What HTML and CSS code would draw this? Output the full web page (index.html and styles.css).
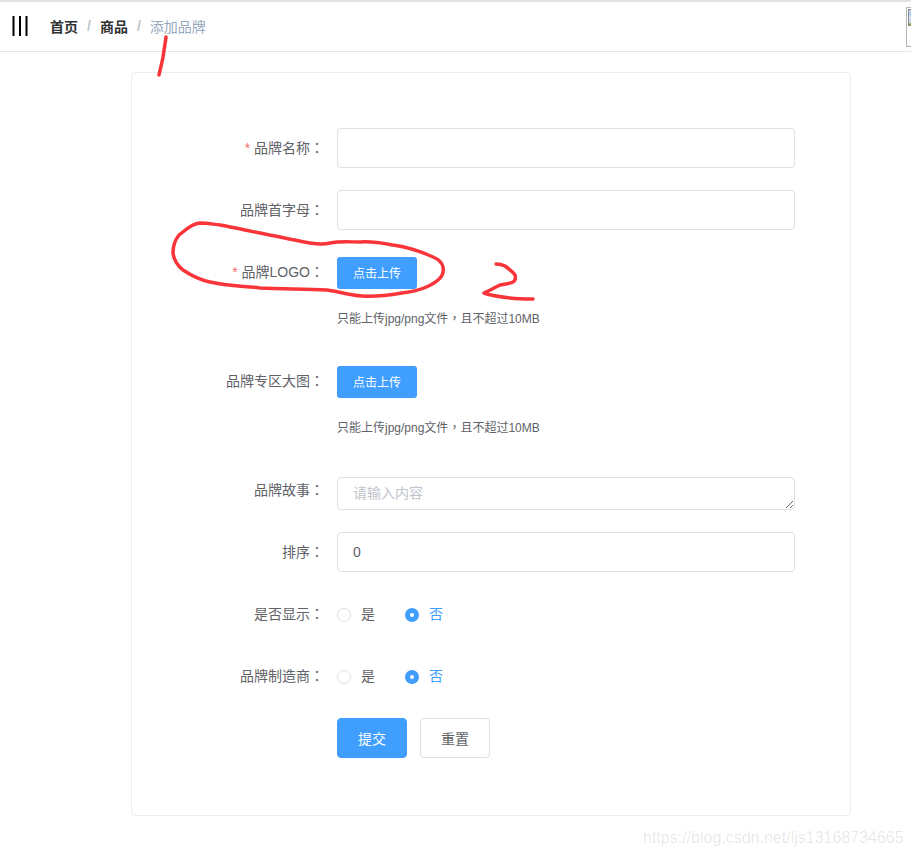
FILE: index.html
```html
<!DOCTYPE html>
<html lang="zh-CN">
<head>
<meta charset="utf-8">
<title>添加品牌</title>
<link rel="stylesheet" href="styles.css">
</head>
<body>
<header class="navbar">
  <svg class="hamburger" width="16" height="20" viewBox="0 0 16 20"><path d="M1.5 0V20M8 0V20M14.5 0V20" stroke="#000" stroke-width="2" fill="none"/></svg>
  <nav class="crumbs">
    <span class="crumb">首页</span><span class="sep">/</span>
    <span class="crumb">商品</span><span class="sep">/</span>
    <span class="crumb crumb-current">添加品牌</span>
  </nav>
  <span class="broken-img"><svg width="16" height="17" viewBox="0 0 16 17"><rect x="0.5" y="0.5" width="15" height="16" fill="#cfe0f5" stroke="#8a8a8a"/><rect x="1" y="1" width="14" height="6" fill="#b7d2f2"/><path d="M1 15l4-3 3 2 7-2v4H1z" fill="#6fae4a"/></svg></span>
</header>
<main class="content">
  <form class="card">
    <div class="row"><label class="label"><i class="req">*</i> 品牌名称<span class="punct">：</span></label><div class="field"><input class="input" type="text"></div></div>
    <div class="row"><label class="label">品牌首字母<span class="punct">：</span></label><div class="field"><input class="input" type="text"></div></div>
    <div class="row row-upload"><label class="label"><i class="req">*</i> 品牌LOGO<span class="punct">：</span></label><div class="field"><button class="btn-upload" type="button">点击上传</button><p class="tip">只能上传jpg/png文件<span class="punct">，</span>且不超过10MB</p></div></div>
    <div class="row row-upload row-upload-tall"><label class="label">品牌专区大图<span class="punct">：</span></label><div class="field"><button class="btn-upload" type="button">点击上传</button><p class="tip">只能上传jpg/png文件<span class="punct">，</span>且不超过10MB</p></div></div>
    <div class="row row-area"><label class="label">品牌故事<span class="punct">：</span></label><div class="field"><textarea class="textarea" rows="1" placeholder="请输入内容"></textarea></div></div>
    <div class="row"><label class="label">排序<span class="punct">：</span></label><div class="field"><input class="input" type="text" value="0"></div></div>
    <div class="row"><label class="label">是否显示<span class="punct">：</span></label><div class="field radios"><span class="radio"><i class="dot"></i>是</span><span class="radio radio-on"><i class="dot"></i>否</span></div></div>
    <div class="row"><label class="label">品牌制造商<span class="punct">：</span></label><div class="field radios"><span class="radio"><i class="dot"></i>是</span><span class="radio radio-on"><i class="dot"></i>否</span></div></div>
    <div class="row row-last"><span class="label"></span><div class="field actions"><button class="btn btn-primary" type="button">提交</button><button class="btn" type="button">重置</button></div></div>
  </form>
</main>
<svg class="ink" width="911" height="856" viewBox="0 0 911 856">
  <g fill="none" stroke="#fa3539" stroke-width="3.5" stroke-linecap="round" stroke-linejoin="round">
    <path d="M166 37C165 45 164 50 163 57C162 63 160 70 159 75"/>
    <path d="M200 223C190 224 185 231 179 235C175 240 173 246 173 253C174 261 178 266 183 270C192 276 200 280 210 282C228 286 244 286 260 288C285 289 305 289 327 290C340 292 350 295 362 296C378 297 390 295 402 293C418 291 430 287 438 280C443 276 444 272 443 267C442 262 438 259 433 257C420 251 407 247 393 245C382 243 372 241 360 242C350 242 340 241 330 243C322 245 316 244 310 243C292 240 276 236 260 233C245 230 232 227 220 225C212 224 206 223 200 223Z"/>
    <path d="M496 264C500 264 503 265 505 266C509 269 513 272 515 275C516 279 515 281 513 282C509 284 504 284 500 285C494 288 489 291 484 293C492 296 501 297 510 298C518 299 526 299 533 299"/>
  </g>
</svg>
<span class="watermark">https://blog.csdn.net/ljs13168734665</span>
</body>
</html>
```

FILE: styles.css
```css
* { box-sizing: border-box; }
html, body { margin: 0; padding: 0; }
body {
  position: relative;
  width: 911px;
  height: 856px;
  overflow: hidden;
  background: #fff;
  color: #606266;
  font-family: "Liberation Sans", "Noto Sans CJK SC", sans-serif;
  font-size: 14px;
}
.navbar {
  display: flex;
  align-items: center;
  height: 52px;
  padding-left: 12px;
  padding-bottom: 1px;
  border-top: 2px solid #e2e2e2;
  border-bottom: 1px solid #e6e6e6;
}
.hamburger { flex: none; margin-right: 22px; }
.crumbs { display: flex; align-items: center; }
.crumb { color: #303133; font-weight: 700; }
.crumb-current { color: #97a8be; font-weight: 400; }
.sep { margin: 0 9px; color: #c0c4cc; font-weight: 700; }
.broken-img {
  position: absolute;
  top: 7px;
  left: 906px;
  width: 40px;
  height: 40px;
  padding: 1px;
  border: 1px solid #b5b5b5;
}
.broken-img svg { display: block; }
.content { padding: 20px 60px 0 131px; }
.card {
  width: 720px;
  height: 744px;
  padding: 55px 55px 0 0;
  border: 1px solid #ebeef5;
  border-radius: 4px;
  box-shadow: 0 0 1px rgba(0, 0, 0, 0.02);
}
.row { display: flex; min-height: 40px; margin-bottom: 22px; }
.row-upload { height: 87px; }
.row-upload-tall { height: 94px; }
.row-area { height: 33px; min-height: 33px; }
.row-last { margin-bottom: 0; }
.label {
  flex: none;
  width: 205px;
  height: 40px;
  padding-right: 13px;
  line-height: 40px;
  text-align: right;
  color: #606266;
}
.row-area .label { height: 33px; line-height: 26px; }
.punct {
  display: inline-block;
  width: 1em;
  line-height: 1;
  font-family: "Noto Sans CJK TC", sans-serif;
}
.req { color: #f56c6c; font-style: normal; }
.field { flex: 1; min-width: 0; }
.input, .textarea {
  display: block;
  width: 100%;
  border: 1px solid #dcdfe6;
  border-radius: 4px;
  background: #fff;
  color: #606266;
  font: inherit;
  outline: none;
  padding: 0 15px;
}
.input { height: 40px; }
.textarea { height: 33px; padding: 5px 15px; line-height: 21px; resize: vertical; }
.textarea::placeholder { color: #c0c4cc; }
.btn-upload {
  display: block;
  width: 80px;
  height: 32px;
  margin-top: 5px;
  padding: 0 0 2px;
  border: 0;
  border-radius: 3px;
  background: #409eff;
  color: #fff;
  font: inherit;
  font-size: 12px;
}
.tip { margin: 21px 0 0; font-size: 12px; line-height: 18px; color: #606266; }
.radios { display: flex; align-items: center; height: 40px; gap: 30px; }
.radio { display: flex; align-items: center; color: #606266; line-height: 14px; }
.dot {
  display: block;
  width: 14px;
  height: 14px;
  margin: 2px 10px 0 0;
  border: 1px solid #dcdfe6;
  border-radius: 50%;
  background: #fff;
}
.radio-on { color: #409eff; }
.radio-on .dot {
  border: 5px solid #409eff;
  background: #fff;
}
.actions { display: flex; gap: 13px; }
.btn {
  width: 70px;
  height: 40px;
  border: 1px solid #dcdfe6;
  border-radius: 4px;
  background: #fff;
  color: #606266;
  font: inherit;
}
.btn-primary { border-color: #409eff; background: #409eff; color: #fff; }
.ink { position: absolute; top: 0; left: 0; pointer-events: none; }
.watermark {
  position: absolute;
  top: 829px;
  left: 643px;
  font-size: 16px;
  line-height: 18px;
  color: rgba(0, 0, 0, 0.1);
  white-space: nowrap;
}
```
